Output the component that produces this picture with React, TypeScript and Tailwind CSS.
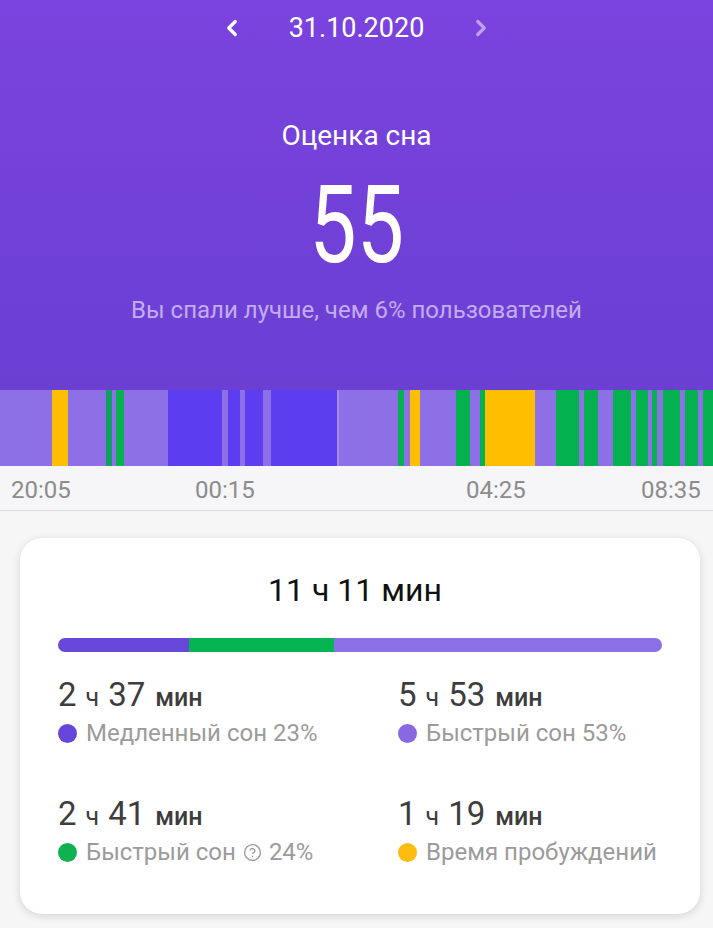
import { ChevronLeft, ChevronRight, CircleHelp } from "lucide-react";

type Seg = { w: number; c: string };

const LIGHT = "#8d70e6";
const DEEP = "#5c3ef0";
const GREEN = "#03b24f";
const YELLOW = "#ffbe00";

// segment boundaries in px of a 713px wide band
const stops: [number, string][] = [
  [52, LIGHT], [68, YELLOW], [106, LIGHT], [112, "#10a062"], [116, LIGHT], [124, GREEN],
  [168, LIGHT], [222, DEEP], [228, LIGHT], [240, DEEP], [245, LIGHT], [263, DEEP],
  [271, LIGHT], [337, DEEP], [339, "#a58ae9"], [398, LIGHT], [404, GREEN], [410, LIGHT],
  [420, YELLOW], [456, LIGHT], [470, GREEN], [480, LIGHT], [485, GREEN], [535, YELLOW],
  [556, LIGHT], [579, GREEN], [584, LIGHT], [598, GREEN], [613, LIGHT], [631, GREEN],
  [636, LIGHT], [648, GREEN], [652, LIGHT], [657, GREEN], [663, LIGHT], [680, GREEN],
  [685, LIGHT], [698, GREEN], [703, LIGHT], [713, GREEN],
];

const segments: Seg[] = stops.map(([end, c], i) => ({
  w: end - (i === 0 ? 0 : stops[i - 1][0]),
  c,
}));

const ticks = [
  { label: "20:05", left: 11 },
  { label: "00:15", left: 195 },
  { label: "04:25", left: 466 },
  { label: "08:35", left: 641 },
];

const stats = [
  { h: "2", m: "37", label: "Медленный сон 23%", dot: "bg-[#6646d8]" },
  { h: "5", m: "53", label: "Быстрый сон 53%", dot: "bg-[#8a68e2]" },
  { h: "2", m: "41", label: "Быстрый сон", pct: "24%", help: true, dot: "bg-[#10b150]" },
  { h: "1", m: "19", label: "Время пробуждений", dot: "bg-[#fdbd10]" },
];

function Stat({ s }: { s: (typeof stats)[number] }) {
  return (
    <div>
      <div className="flex items-baseline leading-[36px] text-[#3d3d3d]">
        <span className="text-[33px]">{s.h}</span>
        <span className="ml-[9px] text-[25px]">ч</span>
        <span className="ml-[9px] text-[33px]">{s.m}</span>
        <span className="ml-[10px] text-[25px] font-medium">мин</span>
      </div>
      <div className="mt-[3px] flex items-center leading-[28px] text-[24px] text-[#9b9b9b]">
        <span className={`mr-[9px] h-[19px] w-[19px] shrink-0 rounded-full ${s.dot}`} />
        <span>{s.label}</span>
        {s.help && <CircleHelp className="mx-[7px] h-[19px] w-[19px]" strokeWidth={1.75} />}
        {s.pct && <span>{s.pct}</span>}
      </div>
    </div>
  );
}

export default function App() {
  return (
    <div className="min-h-[928px] w-[713px] bg-[#f6f6f6] font-['Roboto',sans-serif]">
      {/* Header with score */}
      <div className="flex h-[390px] flex-col items-center bg-gradient-to-b from-[#7b43df] to-[#6a3fd2] text-white">
        <div className="flex h-[56px] items-center gap-[44px]">
          <ChevronLeft className="h-[26px] w-[26px]" strokeWidth={3} />
          <span className="text-[27px] leading-none">31.10.2020</span>
          <ChevronRight className="h-[26px] w-[26px] opacity-50" strokeWidth={3} />
        </div>
        <p className="mt-[63px] text-[28px] leading-[34px]">Оценка сна</p>
        <p className="mt-[18px] scale-x-[0.78] text-[108px] leading-none">55</p>
        <p className="mt-[16px] text-[24px] leading-[30px] text-[#c4acf4]">
          Вы спали лучше, чем 6% пользователей
        </p>
      </div>

      {/* Sleep phase band */}
      <div className="flex h-[76px]">
        {segments.map((s, i) => (
          <div key={i} className="h-full shrink-0" style={{ width: s.w, background: s.c }} />
        ))}
      </div>
      <div className="relative h-[45px] border-b border-[#dcdcdc] bg-[#f6f6f8]">
        {ticks.map((t) => (
          <span
            key={t.label}
            className="absolute top-[10px] text-[24px] leading-[28px] text-[#8c8c8c]"
            style={{ left: t.left }}
          >
            {t.label}
          </span>
        ))}
      </div>

      {/* Summary card */}
      <div className="pt-[27px] pr-[13px] pb-[16px] pl-[20px]">
        <div className="rounded-[22px] bg-white px-[38px] pt-[32px] pb-[48px] shadow-[0_2px_8px_rgba(0,0,0,0.14)]">
          <p className="pr-[10px] text-center text-[32px] leading-[40px] text-[#111]">11 ч 11 мин</p>
          <div className="mt-[28px] flex h-[14px] overflow-hidden rounded-full">
            <div className="h-full w-[21.7%] bg-[#6848d9]" />
            <div className="h-full w-[24%] bg-[#05b552]" />
            <div className="h-full flex-1 bg-[#8c70e6]" />
          </div>
          <div className="mt-[25px] grid grid-cols-2 gap-y-[49px]">
            {stats.map((s, i) => (
              <div key={i} className={i % 2 === 1 ? "pl-[38px]" : ""}>
                <Stat s={s} />
              </div>
            ))}
          </div>
        </div>
      </div>
    </div>
  );
}
